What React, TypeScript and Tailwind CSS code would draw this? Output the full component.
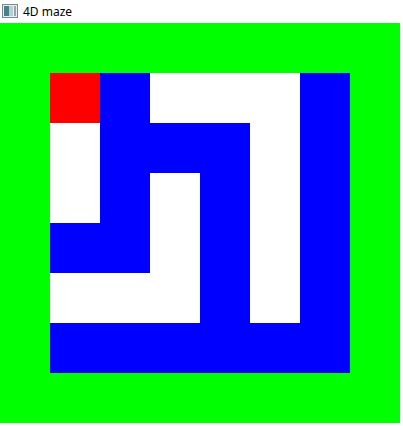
import React from "react";

const grid = [
  "RBWWWB",
  "WBBBWB",
  "WBWBWB",
  "BBWBWB",
  "WWWBWB",
  "BBBBBB",
];

const colorClass: Record<string, string> = {
  R: "bg-[#ff0000]",
  B: "bg-[#0000ff]",
  W: "bg-white",
};

export default function App() {
  return (
    <div className="w-[403px] h-[426px] bg-white overflow-hidden" style={{ fontFamily: '"Segoe UI", "Noto Sans", "Liberation Sans", sans-serif' }}>
      <div className="h-[23px] flex items-center pl-[2px]">
        <svg width="16" height="14" viewBox="0 0 16 14" className="mb-[1px]">
          <rect x="0.5" y="0.5" width="15" height="13" fill="#e8eef0" stroke="#7a8a90" />
          <rect x="2" y="2" width="5" height="10" fill="#4f7f86" />
          <rect x="7" y="2" width="4" height="10" fill="#b8d0d4" />
          <rect x="12" y="2" width="2" height="10" fill="#9aa4a8" />
        </svg>
        <span className="ml-[5px] text-[12px] text-black leading-none">4D maze</span>
      </div>
      <div className="w-[400px] h-[400px] bg-[#00ff00] p-[50px]">
        <div className="grid grid-cols-6 w-[300px] h-[300px]">
          {grid.flatMap((row, r) =>
            row.split("").map((c, i) => (
              <div key={`${r}-${i}`} className={`w-[50px] h-[50px] ${colorClass[c]}`} />
            ))
          )}
        </div>
      </div>
    </div>
  );
}
